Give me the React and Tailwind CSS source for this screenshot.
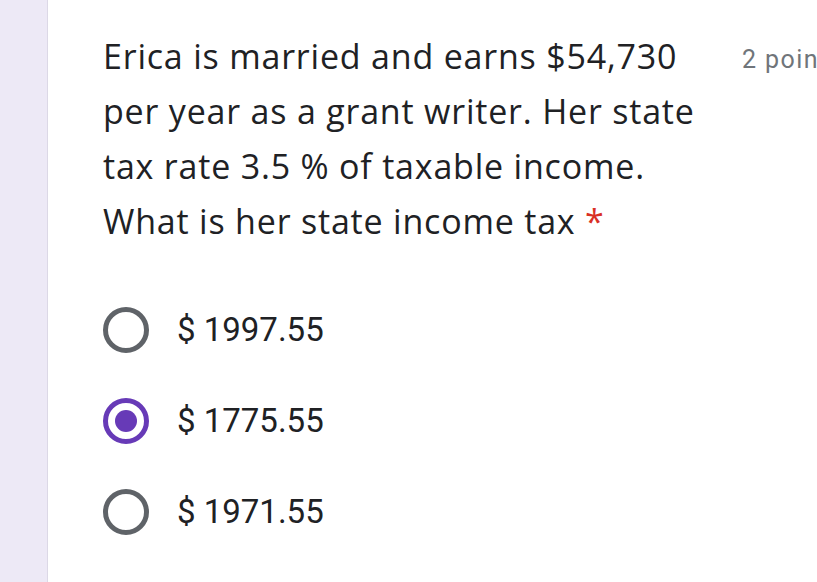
import React from 'react';

const options = [
  { label: '$ 1997.55', checked: false },
  { label: '$ 1775.55', checked: true },
  { label: '$ 1971.55', checked: false },
];

function Radio({ checked }) {
  if (checked) {
    return (
      <div className="w-[46px] h-[46px] rounded-full border-[5px] border-[#673ab7] flex items-center justify-center shrink-0">
        <div className="w-[22px] h-[22px] rounded-full bg-[#673ab7]" />
      </div>
    );
  }
  return <div className="w-[46px] h-[46px] rounded-full border-[5px] border-[#5f6368] shrink-0" />;
}

export default function App() {
  return (
    <div className="flex w-[817px] h-[582px] overflow-hidden bg-white" style={{ fontFamily: 'Roboto, "Noto Sans", sans-serif' }}>
      <div className="w-[48px] shrink-0 bg-[#ede9f6] border-r border-[#dcd8e6]" />
      <div className="flex-1 min-w-0 pl-[55px] pt-[29px]">
        <div className="flex">
          <div className="w-[600px] shrink-0 text-[34px] leading-[55px] tracking-[0.8px] text-[#202124]" style={{ fontFamily: '"Open Sans", sans-serif' }}>
            Erica is married and earns $54,730<br />
            per year as a grant writer. Her state<br />
            tax rate 3.5 % of taxable income.<br />
            What is her state income tax <span className="text-[#d93025]">*</span>
          </div>
          <div className="ml-[39px] pt-[12px] text-[25px] tracking-[1.4px] text-[#70757a] whitespace-nowrap">2 points</div>
        </div>
        <div className="mt-[58px] flex flex-col gap-[45px]">
          {options.map(o => (
            <div key={o.label} className="flex items-center h-[46px]">
              <Radio checked={o.checked} />
              <span className="ml-[28px] text-[33px] text-[#202124]">{o.label}</span>
            </div>
          ))}
        </div>
      </div>
    </div>
  );
}
